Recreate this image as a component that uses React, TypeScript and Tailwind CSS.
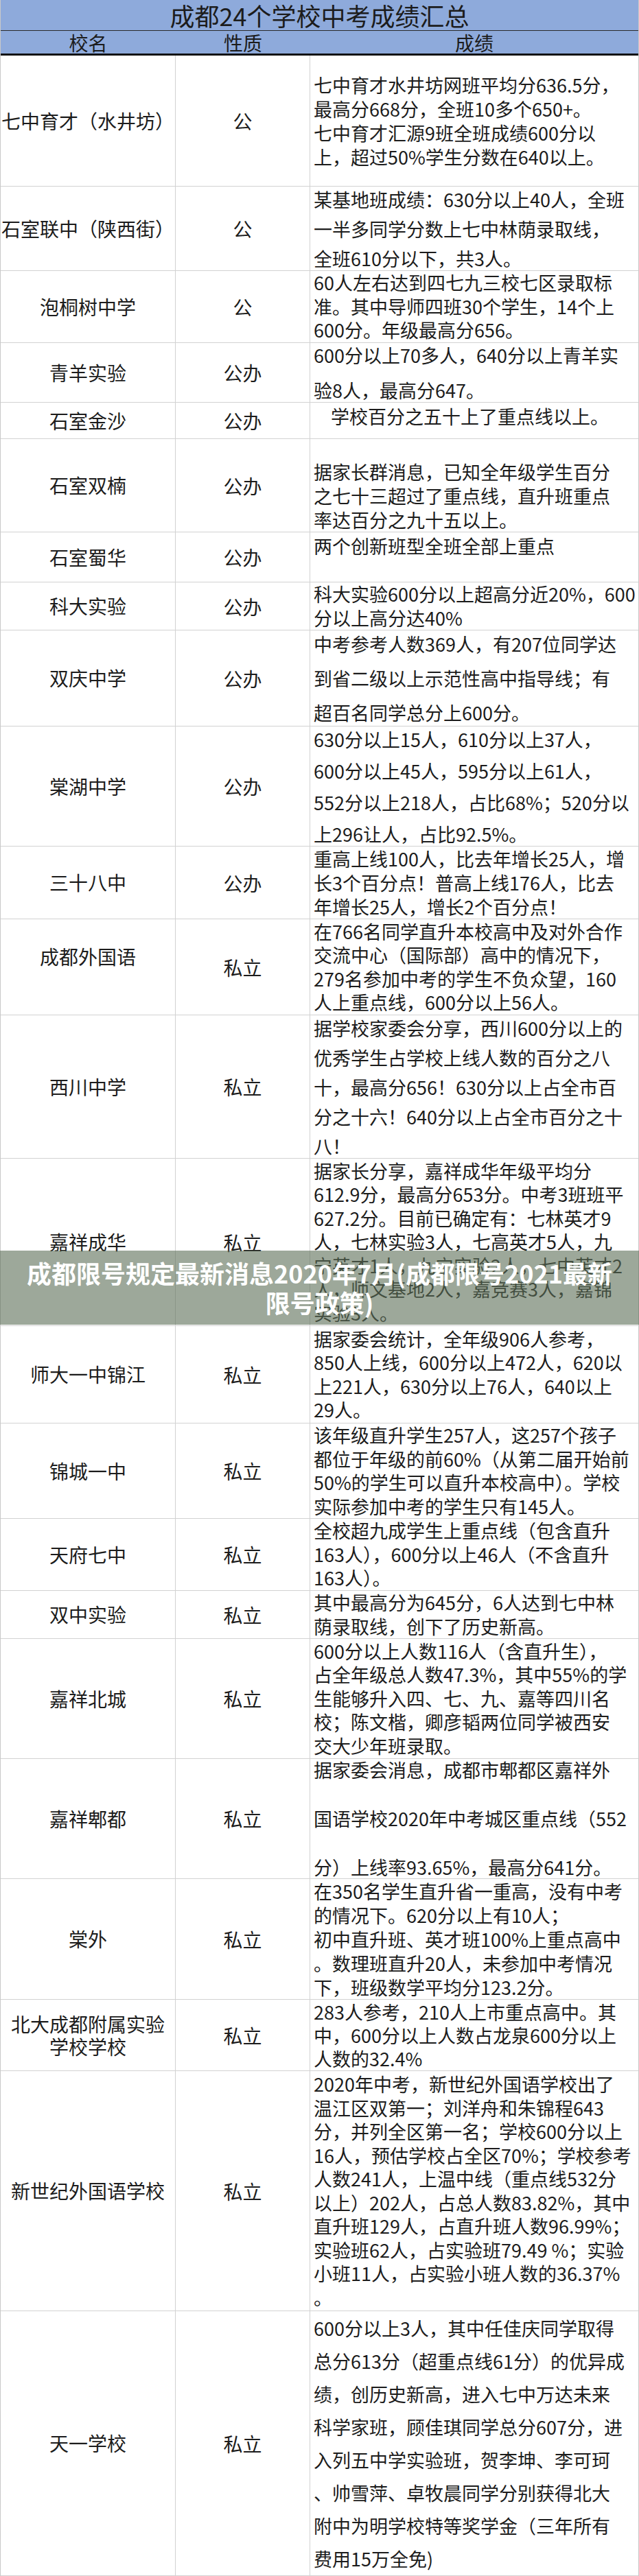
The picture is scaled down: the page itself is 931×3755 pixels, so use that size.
type Row = {
  name: string[];
  kind: string;
  lines: string[];
  h: string;
  lh?: string;
  body?: string;
  nameCls?: string;
};

const rows: Row[] = [
  {
    name: ["七中育才（水井坊）"],
    kind: "公",
    h: "h-[191px]",
    lh: "leading-[35px]",
    lines: [
      "七中育才水井坊网班平均分636.5分，",
      "最高分668分，全班10多个650+。",
      "七中育才汇源9班全班成绩600分以",
      "上，超过50%学生分数在640以上。",
    ],
  },
  {
    name: ["石室联中（陕西街）"],
    kind: "公",
    h: "h-[123px]",
    lh: "leading-[35px] gap-[8px]",
    lines: ["某基地班成绩：630分以上40人，全班", "一半多同学分数上七中林荫录取线，", "全班610分以下，共3人。"],
  },
  {
    name: ["泡桐树中学"],
    kind: "公",
    h: "h-[105px]",
    lines: ["60人左右达到四七九三校七区录取标", "准。其中导师四班30个学生，14个上", "600分。年级最高分656。"],
  },
  {
    name: ["青羊实验"],
    kind: "公办",
    h: "h-[87px]",
    lh: "leading-[35px] gap-[16px]",
    lines: ["600分以上70多人，640分以上青羊实", "验8人，最高分647。"],
  },
  {
    name: ["石室金沙"],
    kind: "公办",
    h: "h-[53px]",
    body: "justify-center pb-[12px] pl-[30px]",
    lines: ["学校百分之五十上了重点线以上。"],
  },
  {
    name: ["石室双楠"],
    kind: "公办",
    h: "h-[136px]",
    lh: "leading-[35px]",
    body: "justify-start pt-[30px]",
    lines: ["据家长群消息，已知全年级学生百分", "之七十三超过了重点线，直升班重点", "率达百分之九十五以上。"],
  },
  {
    name: ["石室蜀华"],
    kind: "公办",
    h: "h-[73px]",
    body: "justify-start pt-[3px]",
    lines: ["两个创新班型全班全部上重点"],
  },
  {
    name: ["科大实验"],
    kind: "公办",
    h: "h-[70px]",
    lines: ["科大实验600分以上超高分近20%，600", "分以上高分达40%"],
  },
  {
    name: ["双庆中学"],
    kind: "公办",
    h: "h-[140px]",
    lh: "leading-[35px] gap-[15px]",
    lines: ["中考参考人数369人，有207位同学达", "到省二级以上示范性高中指导线；有", "超百名同学总分上600分。"],
  },
  {
    name: ["棠湖中学"],
    kind: "公办",
    h: "h-[175px]",
    lh: "leading-[35px] gap-[11px]",
    lines: [
      "630分以上15人，610分以上37人，",
      "600分以上45人，595分以上61人，",
      "552分以上218人，占比68%；520分以",
      "上296让人，占比92.5%。",
    ],
  },
  {
    name: ["三十八中"],
    kind: "公办",
    h: "h-[106px]",
    lh: "leading-[35px]",
    lines: ["重高上线100人，比去年增长25人，增", "长3个百分点！普高上线176人，比去", "年增长25人，增长2个百分点！"],
  },
  {
    name: ["成都外国语"],
    kind: "私立",
    h: "h-[140px]",
    nameCls: "pb-[30px]",
    lines: [
      "在766名同学直升本校高中及对外合作",
      "交流中心（国际部）高中的情况下，",
      "279名参加中考的学生不负众望，160",
      "人上重点线，600分以上56人。",
    ],
  },
  {
    name: ["西川中学"],
    kind: "私立",
    h: "h-[209px]",
    lh: "leading-[35px] gap-[8px]",
    lines: [
      "据学校家委会分享，西川600分以上的",
      "优秀学生占学校上线人数的百分之八",
      "十，最高分656！630分以上占全市百",
      "分之十六！640分以上占全市百分之十",
      "八！",
    ],
  },
  {
    name: ["嘉祥成华"],
    kind: "私立",
    h: "h-[244px]",
    lines: [
      "据家长分享，嘉祥成华年级平均分",
      "612.9分，最高分653分。中考3班班平",
      "627.2分。目前已确定有：七林英才9",
      "人，七林实验3人，七高英才5人，九",
      "宁英才1人，九宁实验2人，七中英才2",
      "人，师文基地2人，嘉竞赛3人，嘉锦",
      "实验3人。",
    ],
  },
  {
    name: ["师大一中锦江"],
    kind: "私立",
    h: "h-[142px]",
    lines: ["据家委会统计，全年级906人参考，", "850人上线，600分以上472人，620以", "上221人，630分以上76人，640以上", "29人。"],
  },
  {
    name: ["锦城一中"],
    kind: "私立",
    h: "h-[139px]",
    lines: [
      "该年级直升学生257人，这257个孩子",
      "都位于年级的前60%（从第二届开始前",
      "50%的学生可以直升本校高中）。学校",
      "实际参加中考的学生只有145人。",
    ],
  },
  {
    name: ["天府七中"],
    kind: "私立",
    h: "h-[105px]",
    lines: ["全校超九成学生上重点线（包含直升", "163人），600分以上46人（不含直升", "163人）。"],
  },
  {
    name: ["双中实验"],
    kind: "私立",
    h: "h-[70px]",
    lines: ["其中最高分为645分，6人达到七中林", "荫录取线，创下了历史新高。"],
  },
  {
    name: ["嘉祥北城"],
    kind: "私立",
    h: "h-[175px]",
    lines: [
      "600分以上人数116人（含直升生），",
      "占全年级总人数47.3%，其中55%的学",
      "生能够升入四、七、九、嘉等四川名",
      "校；陈文楷，卿彦韬两位同学被西安",
      "交大少年班录取。",
    ],
  },
  {
    name: ["嘉祥郫都"],
    kind: "私立",
    h: "h-[175px]",
    lh: "leading-[32px] gap-[39px]",
    lines: ["据家委会消息，成都市郫都区嘉祥外", "国语学校2020年中考城区重点线（552", "分）上线率93.65%，最高分641分。"],
  },
  {
    name: ["棠外"],
    kind: "私立",
    h: "h-[176px]",
    lh: "leading-[35px]",
    lines: [
      "在350名学生直升省一重高，没有中考",
      "的情况下。620分以上有10人；",
      "初中直升班、英才班100%上重点高中",
      "。数理班直升20人，未参加中考情况",
      "下，班级数学平均分123.2分。",
    ],
  },
  {
    name: ["北大成都附属实验", "学校学校"],
    kind: "私立",
    h: "h-[104px]",
    lh: "leading-[34px]",
    lines: ["283人参考，210人上市重点高中。其", "中，600分以上人数占龙泉600分以上", "人数的32.4%"],
  },
  {
    name: ["新世纪外国语学校"],
    kind: "私立",
    h: "h-[350px]",
    lines: [
      "2020年中考，新世纪外国语学校出了",
      "温江区双第一；刘洋舟和朱锦程643",
      "分，并列全区第一名；学校600分以上",
      "16人，预估学校占全区70%；学校参考",
      "人数241人，上温中线（重点线532分",
      "以上）202人，占总人数83.82%，其中",
      "直升班129人，占直升班人数96.99%；",
      "实验班62人，占实验班79.49 %；实验",
      "小班11人，占实验小班人数的36.37%",
      "。",
    ],
  },
  {
    name: ["天一学校"],
    kind: "私立",
    h: "h-[386px]",
    lh: "leading-[35px] gap-[13px]",
    lines: [
      "600分以上3人，其中任佳庆同学取得",
      "总分613分（超重点线61分）的优异成",
      "绩，创历史新高，进入七中万达未来",
      "科学家班，顾佳琪同学总分607分，进",
      "入列五中学实验班，贺李坤、李可珂",
      "、帅雪萍、卓牧晨同学分别获得北大",
      "附中为明学校特等奖学金（三年所有",
      "费用15万全免)",
    ],
  },
];

const App = () => {
  return (
    <div className="relative w-[931px] bg-white font-['Noto_Sans_CJK_SC',sans-serif] text-[#1c1c1c]">
      <div className="border-x border-[#c9c9c9]">
        {/* title + header */}
        <div className="flex h-[45px] items-center justify-center border-b border-[#2a2a2a] bg-[#8eaadb] text-[36px] leading-none">
          成都24个学校中考成绩汇总
        </div>
        <div className="grid h-[36px] grid-cols-[255px_196px_1fr] border-b-[3px] border-[#111] bg-[#8eaadb] text-[28px] leading-none">
          <div className="flex items-center justify-center">校名</div>
          <div className="flex items-center justify-center">性质</div>
          <div className="flex items-center justify-center">成绩</div>
        </div>

        {rows.map((r) => (
          <div
            key={r.name.join("")}
            className={`grid grid-cols-[255px_196px_1fr] border-b border-[#d2d2d2] text-[28px] ${r.h}`}
          >
            <div
              className={`flex flex-col items-center justify-center border-r border-[#d2d2d2] text-center leading-[33px] whitespace-nowrap ${r.nameCls ?? ""}`}
            >
              {r.name.map((n) => (
                <span key={n}>{n}</span>
              ))}
            </div>
            <div className="flex items-center justify-center border-r border-[#d2d2d2]">{r.kind}</div>
            <div
              className={`flex flex-col pl-[5px] text-[27px] whitespace-nowrap ${r.lh ?? "leading-[34.5px]"} ${r.body ?? "justify-center"}`}
            >
              {r.lines.map((l, i) => (
                <div key={i}>{l}</div>
              ))}
            </div>
          </div>
        ))}
      </div>

      {/* caption band over the table */}
      <div className="absolute left-0 right-0 top-[1823px] flex h-[108px] flex-col items-center justify-center bg-[#5c6e57]/60 text-[36px] font-bold leading-[43px] text-white">
        <span>成都限号规定最新消息2020年7月(成都限号2021最新</span>
        <span>限号政策)</span>
      </div>
    </div>
  );
};

export default App;
